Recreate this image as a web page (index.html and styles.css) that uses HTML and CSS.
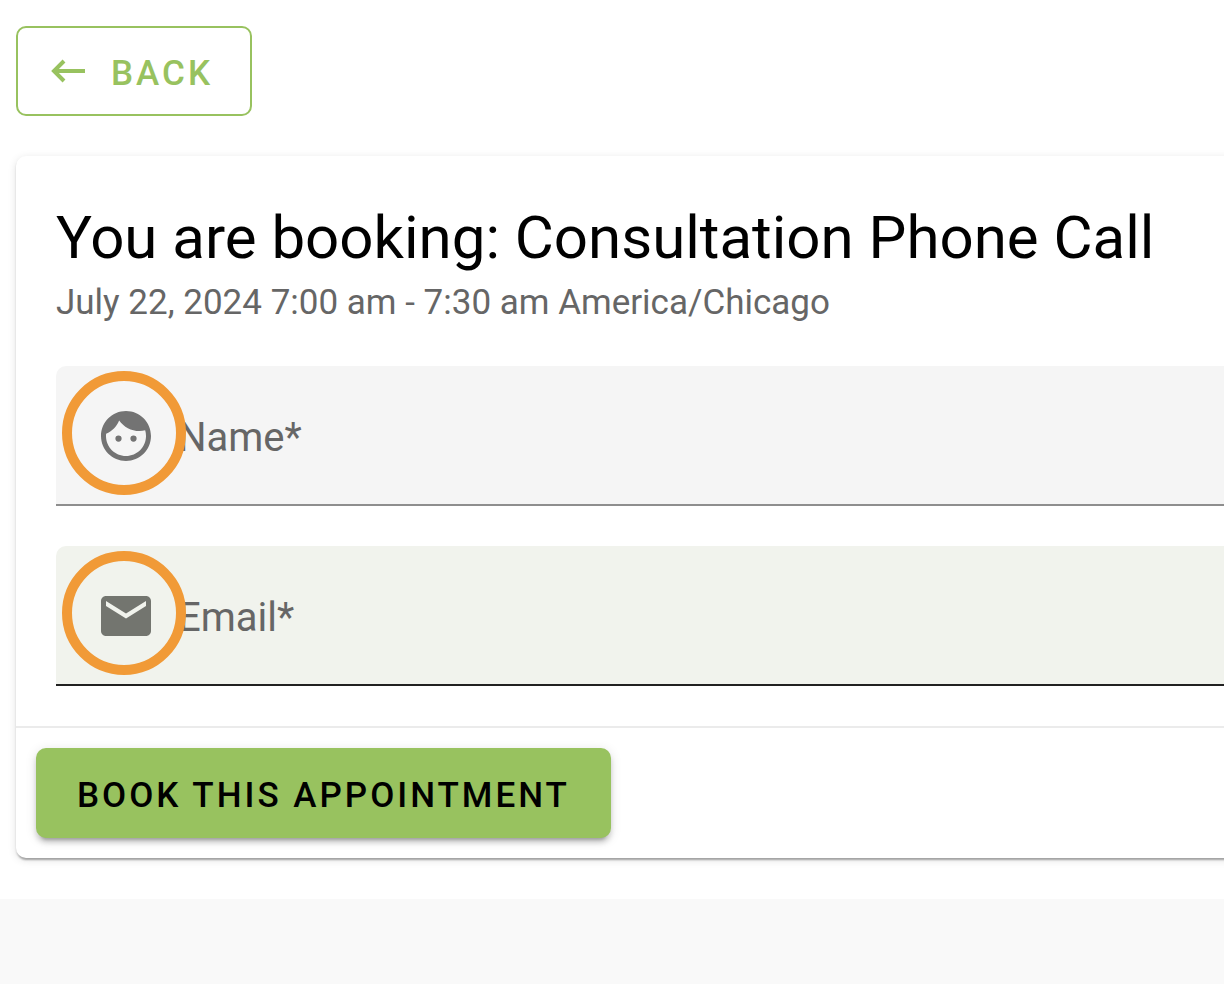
FILE: index.html
```html
<!DOCTYPE html>
<html lang="en">
<head>
    <meta charset="UTF-8">
    <meta name="viewport" content="width=device-width, initial-scale=1.0">
    <title>Book Appointment</title>
    <link rel="stylesheet" href="styles.css">
</head>
<body>
    <main class="page">
        <button type="button" class="back-btn">
            <svg class="back-icon" viewBox="0 0 34 24" aria-hidden="true">
                <path d="M34 12H3M13 2L3 12l10 10"/>
            </svg>
            Back
        </button>

        <form class="card">
            <div class="card-body">
                <h1>You are booking: Consultation Phone Call</h1>
                <p class="subtitle">July 22, 2024 7:00 am - 7:30 am America/Chicago</p>

                <div class="field">
                    <span class="marker"></span>
                    <svg class="field-icon" viewBox="0 0 24 24" aria-hidden="true">
                        <path d="M9 11.75a1.25 1.25 0 1 0 0 2.5 1.25 1.25 0 0 0 0-2.5zm6 0a1.25 1.25 0 1 0 0 2.5 1.25 1.25 0 0 0 0-2.5zM12 2C6.48 2 2 6.48 2 12s4.48 10 10 10 10-4.48 10-10S17.52 2 12 2zm0 18c-4.41 0-8-3.59-8-8 0-.29.02-.58.05-.86 2.36-1.05 4.23-2.98 5.21-5.37C11.07 8.33 14.05 10 17.42 10c.78 0 1.53-.09 2.25-.26.21.71.33 1.47.33 2.26 0 4.41-3.59 8-8 8z"/>
                    </svg>
                    <label for="name">Name*</label>
                    <input type="text" id="name" required>
                </div>

                <div class="field hovered">
                    <span class="marker"></span>
                    <svg class="field-icon" viewBox="0 0 24 24" aria-hidden="true">
                        <path d="M20 4H4c-1.1 0-1.99.9-1.99 2L2 18c0 1.1.9 2 2 2h16c1.1 0 2-.9 2-2V6c0-1.1-.9-2-2-2zm0 4l-8 5-8-5V6l8 5 8-5v2z"/>
                    </svg>
                    <label for="email">Email*</label>
                    <input type="email" id="email" required>
                </div>
            </div>

            <div class="card-actions">
                <button type="submit" class="book-btn">Book this appointment</button>
            </div>
        </form>
    </main>
</body>
</html>
```

FILE: styles.css
```css
* {
    margin: 0;
    padding: 0;
    box-sizing: border-box;
}
body {
    background: #f9f9f9;
    font-family: Roboto, sans-serif;
    overflow-x: hidden;
}
.page {
    background: #fff;
    padding: 26px 0 41px 16px;
}
button {
    font-family: inherit;
    font-size: 35px;
    font-weight: 500;
    letter-spacing: 3px;
    text-transform: uppercase;
    height: 90px;
    border-radius: 10px;
    cursor: pointer;
}
.back-btn {
    display: flex;
    align-items: center;
    gap: 26px;
    padding: 4px 37px 0 33px;
    margin-bottom: 40px;
    background: #fff;
    border: 2px solid #98c25f;
    color: #98c25f;
}
.back-icon {
    width: 34px;
    height: 24px;
    margin-bottom: 4px;
    fill: none;
    stroke: #98c25f;
    stroke-width: 4;
}
/* card runs past the right edge of the window */
.card {
    margin-right: -20px;
    background: #fff;
    border-radius: 10px;
    box-shadow: 0 4px 2px -2px rgba(0, 0, 0, 0.2), 0 2px 2px rgba(0, 0, 0, 0.14), 0 2px 8px rgba(0, 0, 0, 0.12);
}
.card-body {
    padding: 50px 0 40px 40px;
}
h1 {
    font-size: 60px;
    font-weight: 400;
    line-height: 64px;
    white-space: nowrap;
    color: #000;
}
.subtitle {
    margin: 10px 0 40px;
    font-size: 35px;
    line-height: 46px;
    color: #666;
}
.field {
    position: relative;
    display: flex;
    align-items: center;
    height: 140px;
    padding: 2px 0 0 40px;
    background: #f5f5f5;
    border-bottom: 2px solid #8e8e8e;
    border-radius: 10px 0 0 0;
}
.field + .field {
    margin-top: 40px;
}
.field.hovered {
    background: #f1f3ed;
    border-bottom-color: #212121;
}
.field-icon {
    width: 60px;
    height: 60px;
    fill: #737373;
}
.hovered .field-icon {
    fill: #73756f;
}
.field label {
    margin-left: 22px;
    padding-top: 2px;
    font-size: 40px;
    color: #666;
}
.field input {
    flex: 1;
    height: 100%;
    font: inherit;
    font-size: 40px;
    background: transparent;
    border: none;
    outline: none;
}
/* orange ring around the icon */
.marker {
    position: absolute;
    top: 5px;
    left: 6px;
    width: 124px;
    height: 124px;
    border: 10px solid #f19a37;
    border-radius: 50%;
}
.card-actions {
    padding: 20px;
    border-top: 2px solid #ebebeb;
}
.book-btn {
    display: block;
    padding: 4px 41px 0;
    background: #98c25f;
    border: none;
    color: #000;
    box-shadow: 0 7px 3px -5px rgba(0, 0, 0, 0.2), 0 5px 5px rgba(0, 0, 0, 0.14), 0 2px 12px rgba(0, 0, 0, 0.12);
}
```
